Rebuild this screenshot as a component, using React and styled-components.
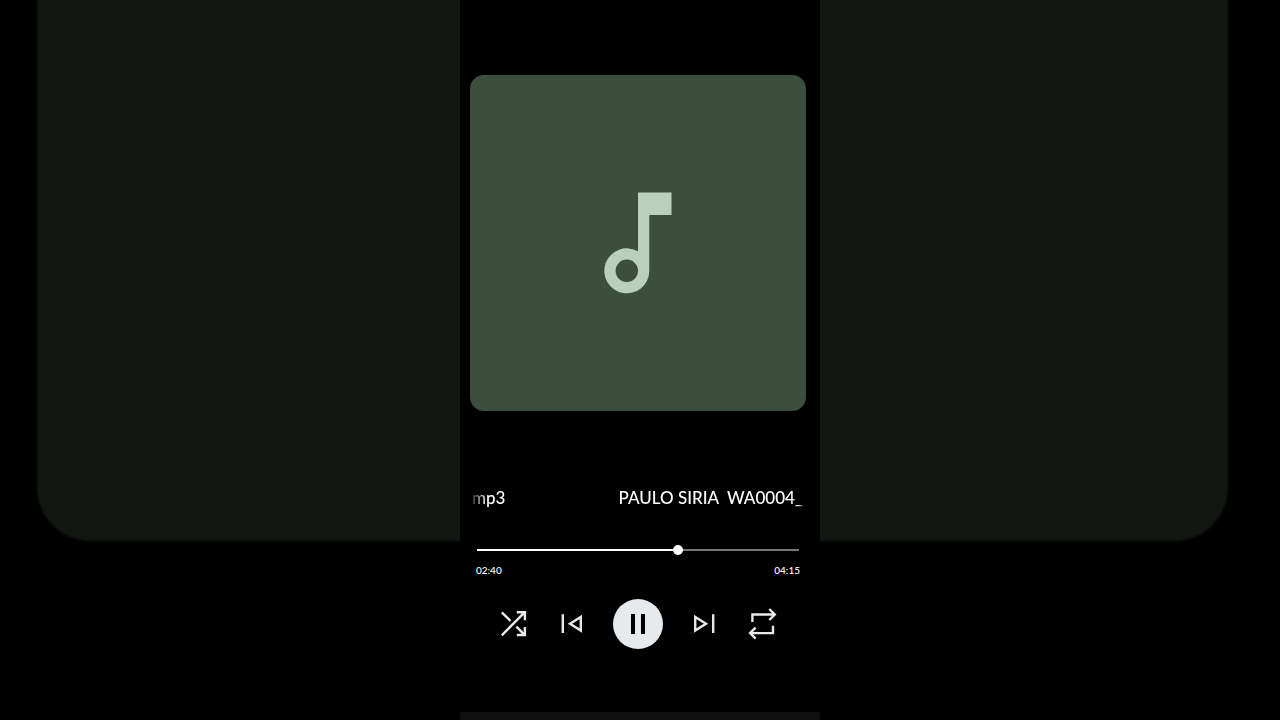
import React, { useState } from "react";
import styled, { createGlobalStyle } from "styled-components";

const DURATION = 255;

const formatTime = (seconds) => {
  const m = String(Math.floor(seconds / 60)).padStart(2, "0");
  const s = String(seconds % 60).padStart(2, "0");
  return `${m}:${s}`;
};

const App = () => {
  const [time, setTime] = useState(160);
  const [playing, setPlaying] = useState(true);

  return (
    <Page>
      <GlobalStyle />
      <Backdrop />
      <Player>
        <Cover>
          <svg width="68" height="102" viewBox="0 0 68 102" aria-hidden="true">
            <path
              fill="#b9d0ba"
              fillRule="evenodd"
              d="M34 0.5H67.5V23H45.3V79A22.5 22.5 0 1 1 34 59.3ZM22.8 67.6A11.2 11.2 0 1 0 22.8 90A11.2 11.2 0 1 0 22.8 67.6Z"
            />
          </svg>
        </Cover>

        <Title>
          <span>mp3</span>
          <span>{"PAULO SIRIA  WA0004_"}</span>
        </Title>

        <Progress>
          <Seek
            type="range"
            aria-label="Seek"
            min="0"
            max={DURATION}
            value={time}
            onChange={(e) => setTime(Number(e.target.value))}
            style={{ "--played": `${(time / DURATION) * 100}%` }}
          />
          <Times>
            <span>{formatTime(time)}</span>
            <span>{formatTime(DURATION)}</span>
          </Times>
        </Progress>

        {/* Playback buttons */}
        <Controls>
          <IconButton aria-label="Shuffle">
            <Icon viewBox="0 0 32 32">
              <path d="M4.8 27.3L27.6 4.4M19.8 4.2H27.9V12.2M4.8 4.4L13.5 13M19.4 18.6L27.6 26.8M19.8 27H27.9V19" />
            </Icon>
          </IconButton>
          <IconButton aria-label="Previous">
            <Icon viewBox="0 0 32 32">
              <path d="M7.8 6.3V25.1M15 15.7L25.8 8.9V22.5Z" />
            </Icon>
          </IconButton>
          <PlayButton
            aria-label={playing ? "Pause" : "Play"}
            onClick={() => setPlaying(!playing)}
          >
            <svg width="50" height="50" viewBox="0 0 50 50">
              {playing ? (
                <path d="M18 15H22V35H18ZM28 15H32V35H28Z" />
              ) : (
                <path d="M19 14L35 25L19 36Z" />
              )}
            </svg>
          </PlayButton>
          <IconButton aria-label="Next">
            <Icon viewBox="0 0 32 32">
              <path d="M24.2 6.3V25.1M17 15.7L6.2 8.9V22.5Z" />
            </Icon>
          </IconButton>
          <IconButton aria-label="Repeat">
            <Icon viewBox="0 0 32 32">
              <path d="M5.4 14V6.5H27.6M22.3 1L27.8 6.5L22.3 12M26 17.7V25.1H4M8.6 19.6L3.1 25.1L8.6 30.6" />
            </Icon>
          </IconButton>
        </Controls>

        <BottomBar />
      </Player>
    </Page>
  );
};

const GlobalStyle = createGlobalStyle`
  body {
    margin: 0;
    background: #000;
    color: #fff;
    font-family: Lato, "Open Sans", sans-serif;
  }
`;

const Page = styled.main`
  display: grid;
  min-height: 100vh;
  overflow: hidden;
`;

// Enlarged, dimmed cover behind the player
const Backdrop = styled.div`
  grid-area: 1 / 1;
  margin: -8px 52px 179px 37px;
  border-radius: 0 0 54px 54px;
  background: #121712;
  filter: blur(1px);
`;

const Player = styled.section`
  grid-area: 1 / 1;
  justify-self: center;
  z-index: 1;
  display: flex;
  flex-direction: column;
  box-sizing: border-box;
  width: 100%;
  max-width: 360px;
  padding-top: 75px;
  background: #000;
`;

const Cover = styled.div`
  display: flex;
  align-items: center;
  justify-content: center;
  margin: 0 14px 0 10px;
  aspect-ratio: 1;
  border-radius: 14px;
  background: #3c4f3c;
`;

const Title = styled.h1`
  display: flex;
  gap: 113px;
  margin: 75px 14px 0 12px;
  overflow: hidden;
  font-size: 17px;
  line-height: 24px;
  font-weight: 500;
  white-space: pre;
  mask-image: linear-gradient(
    to right,
    rgba(0, 0, 0, 0.2),
    #000 16px,
    #000 calc(100% - 8px),
    transparent
  );
`;

const Progress = styled.div`
  margin: 35px 20px 0 16px;
`;

const Seek = styled.input`
  display: block;
  width: calc(100% - 2px);
  height: 10px;
  margin: 0 1px;
  appearance: none;
  background: linear-gradient(#fff, #fff) left center / var(--played) 2px
      no-repeat,
    linear-gradient(#777, #777) center / 100% 2px no-repeat;
  cursor: pointer;

  &::-webkit-slider-thumb {
    appearance: none;
    width: 10px;
    height: 10px;
    border-radius: 50%;
    background: #fff;
  }
`;

const Times = styled.div`
  display: flex;
  justify-content: space-between;
  margin-top: 8px;
  font-size: 10px;
  line-height: 14px;
  font-weight: 500;
`;

const Controls = styled.div`
  display: flex;
  align-items: center;
  justify-content: center;
  gap: 26px;
  margin: 22px 4px 0 0;
`;

const IconButton = styled.button`
  padding: 0;
  border: none;
  background: none;
  color: #e6e9e9;
  cursor: pointer;
`;

const Icon = styled.svg`
  display: block;
  width: 32px;
  height: 32px;
  fill: none;
  stroke: currentColor;
  stroke-width: 2.4;
`;

const PlayButton = styled(IconButton)`
  border-radius: 50%;
  background: #e6eaeb;
  color: #000;

  & > svg {
    display: block;
    fill: currentColor;
  }
`;

const BottomBar = styled.div`
  height: 8px;
  margin-top: auto;
  background: #0f0f0f;
`;

export default App;
